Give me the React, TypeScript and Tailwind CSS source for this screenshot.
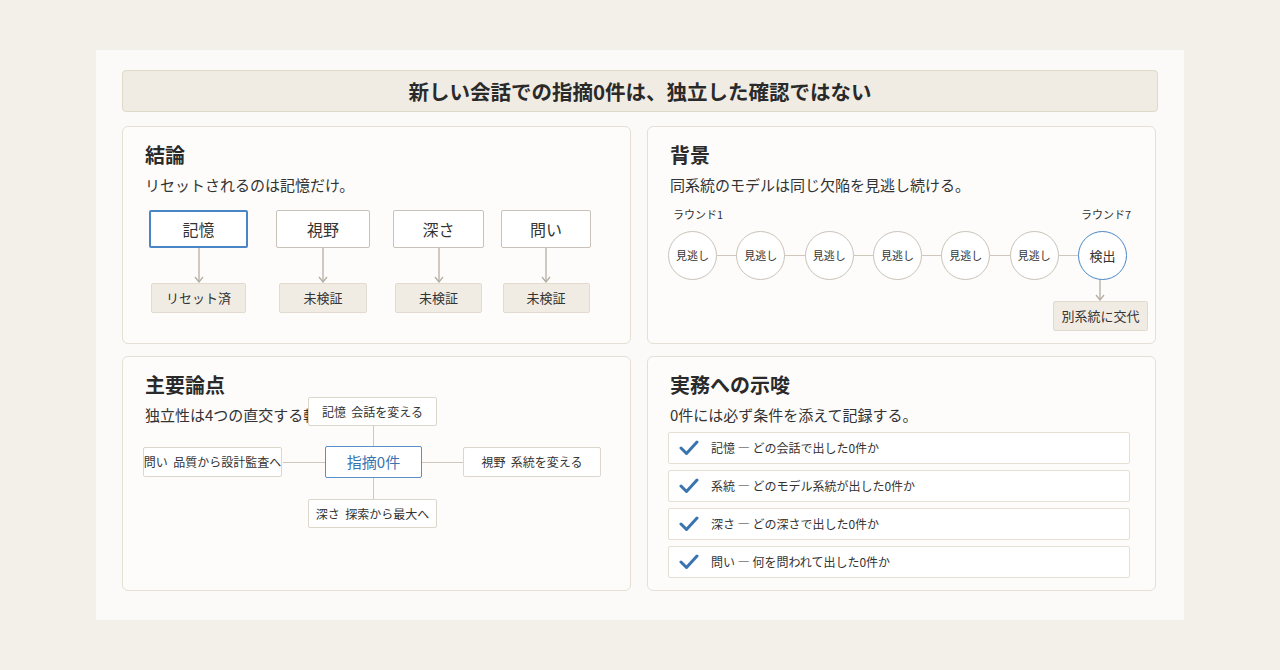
import React from "react";

const F = { fontFamily: '"Noto Sans CJK JP", "Noto Sans", sans-serif' };

function Card({ title, sub, children, h }: { title: string; sub: string; children: React.ReactNode; h: string }) {
  return (
    <div className={`flex flex-col rounded-md border border-[#e6dfd3] bg-[#fdfcfb] pt-[14px] px-[22px] ${h}`}>
      <div className="text-[20px] font-bold text-[#2a2a2a] leading-[28px]">{title}</div>
      <div className="mt-[5px] text-[15px] text-[#333] leading-[22px]">{sub}</div>
      {children}
    </div>
  );
}

const Arrow = ({ h }: { h: number }) => (
  <svg width="10" height={h} viewBox={`0 0 10 ${h}`} className="block">
    <line x1="5" y1="0" x2="5" y2={h - 1} stroke="#b5ada2" strokeWidth="1.3" />
    <polyline points={`1,${h - 6} 5,${h - 1} 9,${h - 6}`} fill="none" stroke="#b5ada2" strokeWidth="1.3" />
  </svg>
);

const Check = () => (
  <svg width="20" height="16" viewBox="0 0 20 16">
    <polyline points="2,8 7.5,13.5 18,2" fill="none" stroke="#3a74b0" strokeWidth="3" strokeLinecap="round" strokeLinejoin="round" />
  </svg>
);

export default function App() {
  const cols = [
    { k: "記憶", v: "リセット済", w: "w-[99px]", lw: "w-[95px]", ml: "", blue: true },
    { k: "視野", v: "未検証", w: "w-[94px]", lw: "w-[88px]", ml: "ml-[28px]" },
    { k: "深さ", v: "未検証", w: "w-[91px]", lw: "w-[87px]", ml: "ml-[23px]" },
    { k: "問い", v: "未検証", w: "w-[90px]", lw: "w-[87px]", ml: "ml-[17px]" },
  ];
  return (
    <div style={F} className="w-[1280px] h-[670px] bg-[#f3f0ea] pt-[50px]">
      <div className="mx-[96px] h-[570px] bg-[#fbfaf8] px-[26px] pt-[20px]">
        <div className="h-[42px] rounded-sm border border-[#e0d8c9] bg-[#f1ece3] flex items-center justify-center text-[20.5px] font-bold text-[#2a2a2a]">
          新しい会話での指摘0件は、独立した確認ではない
        </div>
        <div className="grid grid-cols-[509px_509px] gap-x-[16px] gap-y-[12px] mt-[14px]">
          <Card title="結論" sub="リセットされるのは記憶だけ。" h="h-[218px]">
            <div className="flex items-start mt-[14px] ml-[4px]">
              {cols.map((c) => (
                <div key={c.k} className={`flex flex-col items-center ${c.ml}`}>
                  <div
                    className={`${c.w} h-[38px] flex items-center justify-center text-[16px] text-[#333] bg-white rounded-[2px] ${c.blue ? "border-2 border-[#4a86c5]" : "border border-[#c9c2b8]"}`}
                  >
                    {c.k}
                  </div>
                  <Arrow h={35} />
                  <div className={`${c.lw} h-[30px] flex items-center justify-center text-[13px] text-[#333] bg-[#f1ece3] border border-[#e2dace] rounded-[2px]`}>
                    {c.v}
                  </div>
                </div>
              ))}
            </div>
          </Card>
          <Card title="背景" sub="同系統のモデルは同じ欠陥を見逃し続ける。" h="h-[218px]">
            <div className="flex justify-between mt-[10px] pl-[3px] pr-[2px] text-[11px] text-[#333] leading-[16px]">
              <span>ラウンド1</span>
              <span>ラウンド7</span>
            </div>
            <div className="relative flex justify-between mt-[9px] -ml-[2px] mr-[6px]">
              <div className="absolute left-[20px] right-[20px] top-[24px] h-px bg-[#cfc7bc]" />
              {Array.from({ length: 7 }).map((_, i) => (
                <div
                  key={i}
                  className={`relative w-[49px] h-[49px] rounded-full bg-white flex items-center justify-center ${i === 6 ? "border-[1.5px] border-[#4a86c5] text-[13px]" : "border border-[#c9c2b8] text-[11px]"} text-[#333]`}
                >
                  {i === 6 ? "検出" : "見逃し"}
                </div>
              ))}
            </div>
            <div className="flex flex-col items-end -mr-[15px]">
              <div className="mr-[43px]">
                <Arrow h={21} />
              </div>
              <div className="w-[95px] h-[30px] flex items-center justify-center text-[13px] text-[#333] bg-[#f1ece3] border border-[#e2dace] rounded-[2px]">
                別系統に交代
              </div>
            </div>
          </Card>
          <Card title="主要論点" sub="独立性は4つの直交する軸で決まる。" h="h-[235px]">
            <div className="relative flex-1 -mx-[22px]">
              <div className="absolute left-[250px] top-[0px] w-px h-[102px] bg-[#cfc7bc]" />
              <div className="absolute left-[160px] top-[36px] w-[180px] h-px bg-[#cfc7bc]" />
              {[
                { t: "記憶  会話を変える", l: 185, tp: -29, w: 129, h: 29 },
                { t: "深さ  探索から最大へ", l: 185, tp: 73, w: 129, h: 29 },
                { t: "問い  品質から設計監査へ", l: 20, tp: 21, w: 139, h: 30 },
                { t: "視野  系統を変える", l: 340, tp: 21, w: 138, h: 30 },
              ].map((n) => (
                <div
                  key={n.t}
                  className="absolute flex items-center justify-center whitespace-pre text-[12px] text-[#333] bg-white border border-[#ddd6cb] rounded-[2px]"
                  style={{ left: n.l, top: n.tp, width: n.w, height: n.h }}
                >
                  {n.t}
                </div>
              ))}
              <div className="absolute left-[202px] top-[20px] w-[97px] h-[32px] flex items-center justify-center text-[15px] text-[#3a74b0] bg-white border-[1.5px] border-[#5a8fc8] rounded-[2px]">
                指摘0件
              </div>
            </div>
          </Card>
          <Card title="実務への示唆" sub="0件には必ず条件を添えて記録する。" h="h-[235px]">
            <div className="mt-[6px] -ml-[2px] mr-[3px] flex flex-col gap-[6px]">
              {[
                "記憶 ― どの会話で出した0件か",
                "系統 ― どのモデル系統が出した0件か",
                "深さ ― どの深さで出した0件か",
                "問い ― 何を問われて出した0件か",
              ].map((t) => (
                <div key={t} className="h-[32px] flex items-center gap-[12px] pl-[10px] bg-white border border-[#e6dfd3] rounded-[2px] text-[12px] text-[#333]">
                  <Check />
                  {t}
                </div>
              ))}
            </div>
          </Card>
        </div>
      </div>
    </div>
  );
}
